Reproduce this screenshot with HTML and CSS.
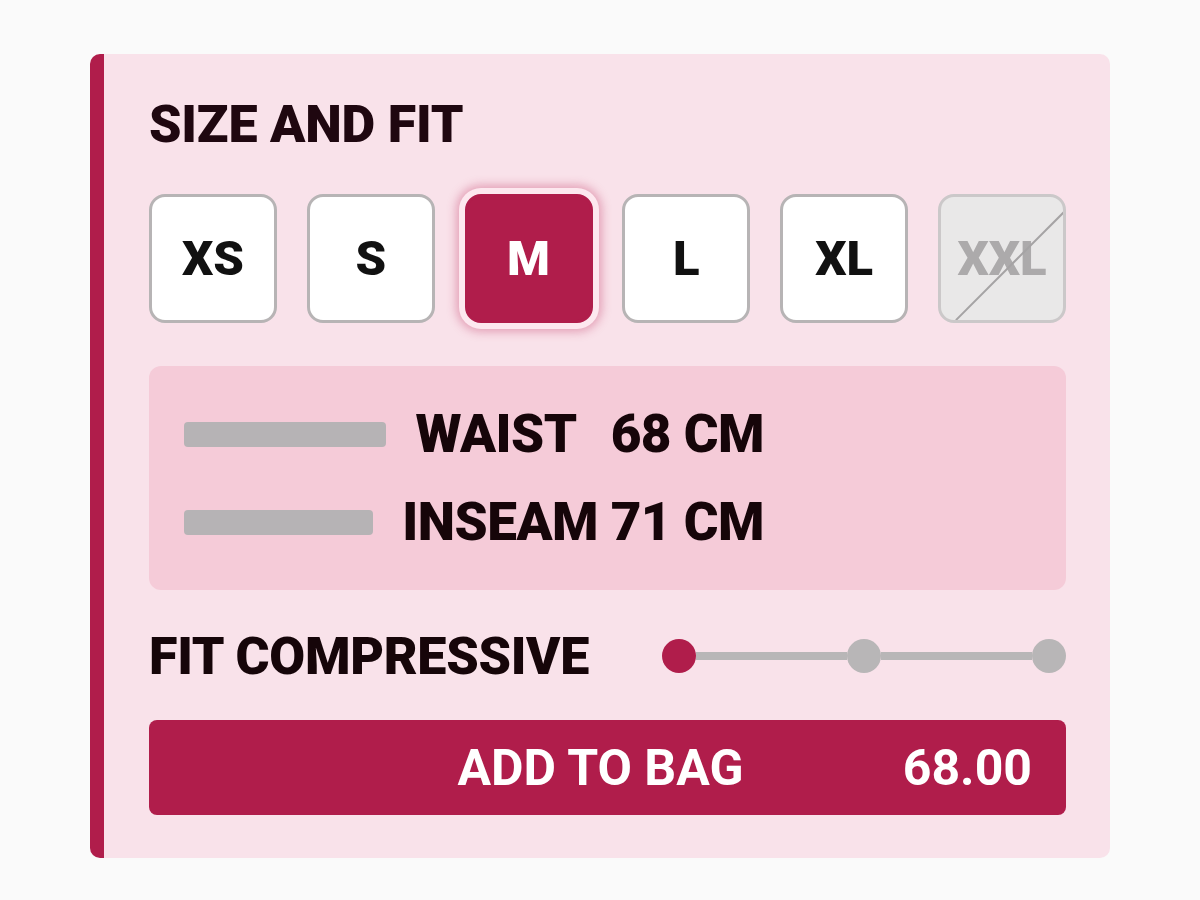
FILE: index.html
```html
<!DOCTYPE html>
<html lang="en">
<head>
    <meta charset="UTF-8">
    <meta name="viewport" content="width=device-width, initial-scale=1.0">
    <title>Size and Fit</title>
    <link rel="stylesheet" href="styles.css">
</head>
<body>
    <div class="fit-card">
        <h2 class="fit-title">SIZE AND FIT</h2>

        <div class="size-row">
            <button class="size-option">XS</button>
            <button class="size-option">S</button>
            <button class="size-option selected">M</button>
            <button class="size-option">L</button>
            <button class="size-option">XL</button>
            <button class="size-option sold-out" disabled>XXL</button>
        </div>

        <div class="measurements">
            <div class="measure-row">
                <span class="measure-bar"></span>
                <span class="measure-text"><span class="measure-name">WAIST</span>68 CM</span>
            </div>
            <div class="measure-row">
                <span class="measure-bar"></span>
                <span class="measure-text">INSEAM 71 CM</span>
            </div>
        </div>

        <div class="fit-row">
            <span class="fit-label">FIT COMPRESSIVE</span>
            <div class="fit-scale">
                <span class="fit-dot active"></span>
                <span class="fit-line"></span>
                <span class="fit-dot"></span>
                <span class="fit-line"></span>
                <span class="fit-dot"></span>
            </div>
        </div>

        <button class="add-button">
            <span></span>
            <span class="add-label">ADD TO BAG</span>
            <span class="add-price">68.00</span>
        </button>
    </div>
</body>
</html>
```

FILE: styles.css
```css
body {
    margin: 0;
    padding: 0;
    background-color: #fafafa;
    font-family: Roboto, "Liberation Sans", Arial, sans-serif;
}
.fit-card {
    width: 1020px;
    margin: 54px 0 0 90px;
    padding: 40px 44px 43px 45px;
    box-sizing: border-box;
    background-color: #f9e2ea;
    border-left: 14px solid #b01d4b;
    border-radius: 10px;
}
.fit-title {
    margin: 0;
    font-size: 52px;
    line-height: 61px;
    font-weight: 900;
    color: #1f0710;
    letter-spacing: -0.2px;
}
.size-row {
    display: flex;
    justify-content: space-between;
    margin-top: 39px;
}
.size-option {
    width: 128px;
    height: 129px;
    padding: 0;
    background-color: #fff;
    border: 3px solid #b7b4b5;
    border-radius: 16px;
    font-family: inherit;
    font-size: 49px;
    font-weight: 900;
    color: #111;
    cursor: pointer;
}
.size-option.selected {
    background-color: #b01d4b;
    border-color: #b01d4b;
    color: #fff;
    box-shadow: 0 0 0 6px #fde8ef, 0 0 10px 9px rgba(190, 40, 90, 0.35);
}
.size-option.sold-out {
    position: relative;
    background-color: #e9e8e8;
    border-color: #cbc8c9;
    color: #acaaab;
    cursor: default;
    overflow: hidden;
}
/* diagonal strike for a size that is out of stock */
.size-option.sold-out::after {
    content: "";
    position: absolute;
    left: -10px;
    top: 50%;
    width: 170px;
    height: 2px;
    background-color: #a5a3a4;
    transform: rotate(-45deg);
}
.measurements {
    margin-top: 43px;
    padding: 40px 35px;
    background-color: #f5cbd8;
    border-radius: 12px;
}
.measure-row {
    display: flex;
    align-items: center;
    width: 580px;
    height: 56px;
}
.measure-row + .measure-row {
    margin-top: 32px;
}
.measure-bar {
    flex-grow: 1;
    height: 25px;
    margin-right: 29px;
    background-color: #b6b3b5;
    border-radius: 4px;
}
.measure-text {
    font-size: 53px;
    font-weight: 900;
    color: #160509;
    letter-spacing: -0.5px;
    white-space: nowrap;
}
.measure-name {
    margin-right: 34px;
}
.fit-row {
    display: flex;
    align-items: center;
    justify-content: space-between;
    margin-top: 41px;
    height: 50px;
}
.fit-label {
    font-size: 52px;
    font-weight: 900;
    color: #160509;
    letter-spacing: -0.3px;
}
.fit-scale {
    display: flex;
    align-items: center;
    width: 404px;
}
.fit-dot {
    width: 34px;
    height: 34px;
    border-radius: 50%;
    background-color: #b8b6b7;
}
.fit-dot.active {
    background-color: #b01d4b;
}
.fit-line {
    flex-grow: 1;
    height: 8px;
    background-color: #b8b6b7;
}
.add-button {
    display: grid;
    grid-template-columns: 1fr auto 1fr;
    align-items: center;
    width: 100%;
    height: 95px;
    margin-top: 39px;
    padding: 0 34px;
    background-color: #b01d4b;
    border: none;
    border-radius: 8px;
    font-family: inherit;
    font-size: 50px;
    font-weight: 700;
    color: #fff;
    cursor: pointer;
}
.add-label {
    margin-right: 14px;
}
.add-price {
    justify-self: end;
}
```
